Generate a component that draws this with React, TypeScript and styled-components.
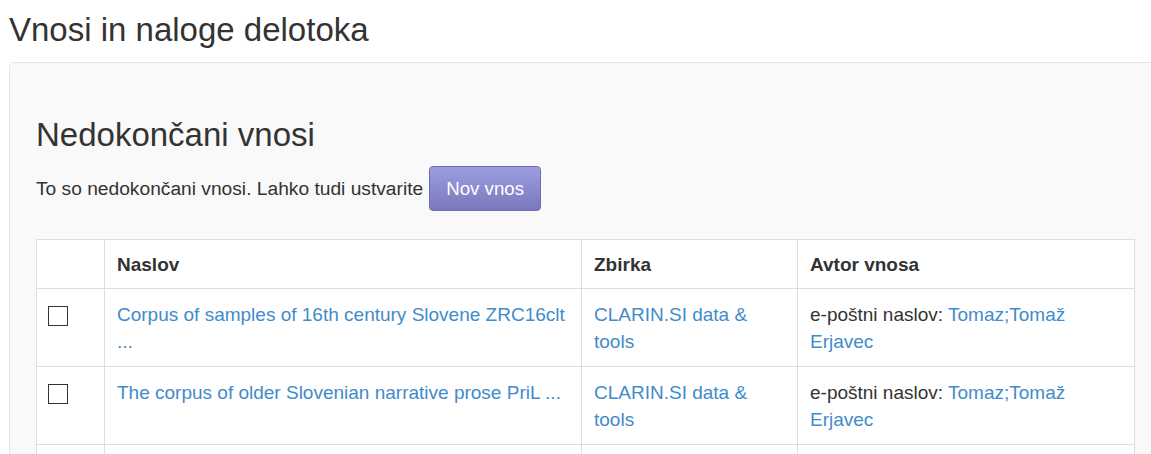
import * as React from 'react';
import styled, { createGlobalStyle } from 'styled-components';

const GlobalStyle = createGlobalStyle`
  html, body {
    margin: 0;
    padding: 0;
    overflow: hidden;
    background: #fff;
  }
  body {
    font-family: "Liberation Sans", Arial, sans-serif;
    font-size: 19.2px;
    line-height: 27px;
    color: #333;
  }
`;

const linkColor = '#428bca';

const Page = styled.div`
  width: 1200px;
  padding: 0 0 0 9px;
`;

const PageTitle = styled.h2`
  margin: 12px 0 14px;
  font-size: 33px;
  font-weight: 400;
  line-height: 36px;
  color: #333;
`;

const Well = styled.div`
  width: 1099px;
  padding: 54px 26px 30px;
  background: #f9f9f9;
  border: 1px solid #e3e3e3;
  border-radius: 5px;
`;

const SectionTitle = styled.h3`
  margin: 0 0 13px;
  font-size: 33px;
  font-weight: 400;
  line-height: 36px;
`;

const Intro = styled.p`
  margin: 0 0 28px;
  display: flex;
  align-items: center;
  gap: 6px;
`;

const NewButton = styled.button`
  font-family: inherit;
  font-size: 18.7px;
  line-height: 25px;
  padding: 9px 16px;
  height: 45px;
  color: #fff;
  border: 1px solid #6d6db2;
  border-radius: 4px;
  background: linear-gradient(to bottom, #9d9de1 0%, #7878bb 100%);
  cursor: pointer;
`;

const Table = styled.table`
  width: 100%;
  border-collapse: collapse;
  background: #fff;
  font-size: 19px;
`;

const Th = styled.th<{ $w?: number }>`
  width: ${({ $w }) => ($w ? `${$w}px` : 'auto')};
  text-align: left;
  font-weight: 700;
  padding: 11px 12px 10px;
  line-height: 27px;
  border: 1px solid #ddd;
  vertical-align: top;
`;

const Td = styled.td`
  padding: 12px 12px 11px;
  line-height: 27px;
  border: 1px solid #ddd;
  vertical-align: top;
`;

const Link = styled.a`
  color: ${linkColor};
  text-decoration: none;
`;

const Check = styled.input`
  appearance: none;
  display: block;
  width: 20px;
  height: 20px;
  margin: 5px 0 0 -1px;
  border: 1px solid #333;
  background: #fff;
`;

interface Entry {
  title: string;
  collection: string;
  email: string;
  name: string;
}

const entries: Entry[] = [
  {
    title: 'Corpus of samples of 16th century Slovene ZRC16clt ...',
    collection: 'CLARIN.SI data & tools',
    email: 'Tomaz;Tomaž',
    name: 'Erjavec',
  },
  {
    title: 'The corpus of older Slovenian narrative prose PriL ...',
    collection: 'CLARIN.SI data & tools',
    email: 'Tomaz;Tomaž',
    name: 'Erjavec',
  },
  {
    title: 'Slovene dataset ...',
    collection: 'CLARIN.SI data & tools',
    email: 'Tomaz;Tomaž',
    name: 'Erjavec',
  },
];

const App: React.FC = () => (
  <Page>
    <GlobalStyle />
    <PageTitle>Vnosi in naloge delotoka</PageTitle>
    <Well>
      <SectionTitle>Nedokončani vnosi</SectionTitle>
      <Intro>
        To so nedokončani vnosi. Lahko tudi ustvarite
        <NewButton type="button">Nov vnos</NewButton>
      </Intro>
      <Table>
        <thead>
          <tr>
            <Th $w={43}></Th>
            <Th $w={452}>Naslov</Th>
            <Th $w={191}>Zbirka</Th>
            <Th>Avtor vnosa</Th>
          </tr>
        </thead>
        <tbody>
          {entries.map((e, i) => (
            <tr key={i}>
              <Td>
                <Check type="checkbox" aria-label={e.title} />
              </Td>
              <Td>
                <Link href="#">{e.title}</Link>
              </Td>
              <Td>
                <Link href="#">{e.collection}</Link>
              </Td>
              <Td>
                e-poštni naslov: <Link href="#">{e.email}</Link> <Link href="#">{e.name}</Link>
              </Td>
            </tr>
          ))}
        </tbody>
      </Table>
    </Well>
  </Page>
);

export default App;
